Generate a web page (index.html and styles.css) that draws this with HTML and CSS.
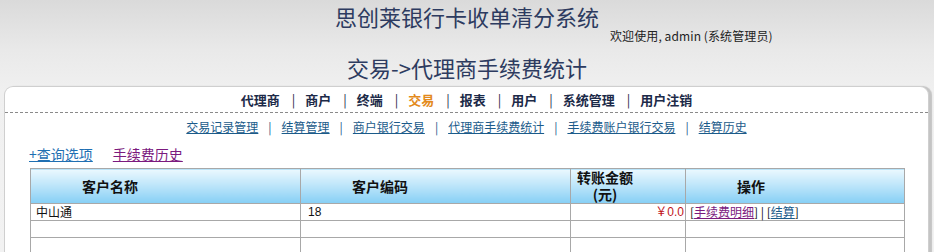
FILE: index.html
```html
<!DOCTYPE html>
<html lang="zh">
<head>
<meta charset="utf-8">
<title>代理商手续费统计</title>
<link rel="stylesheet" href="styles.css">
</head>
<body>
<div class="top">
  <div class="sys-title">思创莱银行卡收单清分系统</div>
  <div class="welcome">欢迎使用, admin (系统管理员)</div>
  <div class="page-title">交易-&gt;代理商手续费统计</div>
</div>
<div class="panel">
  <div class="nav">
    <a class="nav-item">代理商</a><span class="sep">|</span>
    <a class="nav-item">商户</a><span class="sep">|</span>
    <a class="nav-item">终端</a><span class="sep">|</span>
    <a class="nav-item active">交易</a><span class="sep">|</span>
    <a class="nav-item">报表</a><span class="sep">|</span>
    <a class="nav-item">用户</a><span class="sep">|</span>
    <a class="nav-item">系统管理</a><span class="sep">|</span>
    <a class="nav-item">用户注销</a>
  </div>
  <div class="subnav">
    <a href="#">交易记录管理</a><span class="sep">|</span>
    <a href="#">结算管理</a><span class="sep">|</span>
    <a href="#">商户银行交易</a><span class="sep">|</span>
    <a href="#">代理商手续费统计</a><span class="sep">|</span>
    <a href="#">手续费账户银行交易</a><span class="sep">|</span>
    <a href="#">结算历史</a>
  </div>
  <div class="options">
    <a href="#" class="opt">+查询选项</a>
    <a href="#" class="opt visited">手续费历史</a>
  </div>
  <table class="grid">
    <colgroup>
      <col class="c1"><col class="c2"><col class="c3"><col class="c4">
    </colgroup>
    <thead>
      <tr>
        <th class="pl">客户名称</th>
        <th class="pl">客户编码</th>
        <th class="amt"><span class="amt-text">转账金额<br>(元)</span></th>
        <th class="pl">操作</th>
      </tr>
    </thead>
    <tbody>
      <tr>
        <td>中山通</td>
        <td class="num">18</td>
        <td class="money">￥0.0</td>
        <td class="ops">[<a href="#" class="visited">手续费明细</a>] | [<a href="#">结算</a>]</td>
      </tr>
      <tr><td></td><td></td><td></td><td></td></tr>
      <tr><td></td><td></td><td></td><td></td></tr>
    </tbody>
  </table>
</div>
</body>
</html>
```
FILE: styles.css
```css
html, body {
  margin: 0;
  padding: 0;
}
body {
  width: 934px;
  height: 252px;
  overflow: hidden;
  background: linear-gradient(#dadada 0, #e9e9e9 50px, #f0f0f0 90px, #f2f2f2 100%);
  font-family: "Noto Sans CJK SC", "Liberation Sans", sans-serif;
  color: #222;
}
.top {
  display: flex;
  flex-direction: column;
  align-items: center;
  height: 86px;
}
.sys-title {
  height: 28px;
  line-height: 32px;
  font-size: 22px;
  color: #2d3b60;
  overflow: visible;
}
.welcome {
  align-self: flex-start;
  margin-left: 610px;
  margin-top: 0;
  font-size: 12px;
  line-height: 16px;
  height: 16px;
  color: #222;
  letter-spacing: 0.1px;
}
.page-title {
  margin-top: 8px;
  font-size: 22px;
  line-height: 30px;
  height: 30px;
  color: #2d3b60;
}
.panel {
  margin: 0 5px 0 4px;
  height: 180px;
  background: #fff;
  border: 1px solid #cfcfcf;
  border-bottom: none;
  border-radius: 9px 9px 0 0;
  box-shadow: 3px 0 1px #c4c4c4;
}
.nav {
  display: flex;
  justify-content: center;
  align-items: center;
  height: 25px;
  border-bottom: 1px dashed #8a8a8a;
  font-size: 13px;
  font-weight: bold;
  color: #1c2a48;
}
.nav-item {
  color: #1c2a48;
}
.nav-item.active {
  color: #e38a1c;
}
.nav .sep {
  margin: 0 10px 0 12px;
  font-weight: normal;
  color: #1c2a48;
}
.subnav {
  display: flex;
  justify-content: center;
  align-items: center;
  height: 27px;
  font-size: 12px;
}
.subnav a {
  color: #1b5b8a;
  text-decoration: underline;
}
.subnav .sep {
  margin: 0 10px 0 10px;
  color: #1b5b8a;
}
.options {
  display: flex;
  align-items: center;
  gap: 20px;
  height: 28px;
  padding-left: 24px;
  font-size: 14px;
}
.opt {
  color: #1f6fb2;
  text-decoration: underline;
}
a.visited {
  color: #7b1a7e;
}
.grid {
  margin-left: 25px;
  width: 874px;
  border-collapse: collapse;
  table-layout: fixed;
  font-size: 12px;
}
.c1 { width: 270px; }
.c2 { width: 270px; }
.c3 { width: 115px; }
.c4 { width: 219px; }
.grid th, .grid td {
  border: 1px solid #a8a8a8;
  padding: 0;
}
.grid th {
  height: 34px;
  background: linear-gradient(#ebf8fe 0%, #bfe6fa 45%, #86cff5 100%);
  font-size: 14px;
  font-weight: bold;
  color: #111;
  line-height: 16px;
  vertical-align: middle;
}
.grid th.pl {
  text-align: left;
  padding-left: 51px;
}
.grid th.amt {
  text-align: left;
  vertical-align: top;
  padding-left: 6px;
}
.amt-text {
  display: inline-block;
  text-align: center;
  line-height: 17px;
}
.grid td {
  height: 16px;
  line-height: 16px;
  padding-left: 5px;
  color: #111;
}
.grid td.num {
  padding-left: 7px;
  font-family: "Liberation Sans", sans-serif;
}
.grid td.money {
  text-align: right;
  padding-right: 1px;
  color: #c0141a;
  font-family: "Liberation Sans", "Noto Sans CJK SC", sans-serif;
}
.grid td.ops {
  padding-left: 4px;
}
.ops a {
  color: #1b5b8a;
  text-decoration: underline;
}
.ops a.visited {
  color: #7b1a7e;
}
```
